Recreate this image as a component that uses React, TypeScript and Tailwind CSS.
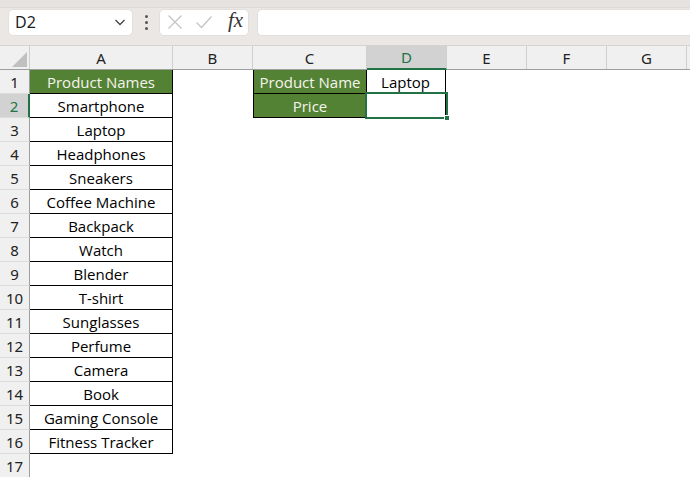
import React from 'react';

const cols = [
  { name: 'A', w: 143 },
  { name: 'B', w: 80 },
  { name: 'C', w: 114 },
  { name: 'D', w: 80 },
  { name: 'E', w: 80 },
  { name: 'F', w: 80 },
  { name: 'G', w: 80 },
  { name: '', w: 80 },
];

const products = [
  'Smartphone',
  'Laptop',
  'Headphones',
  'Sneakers',
  'Coffee Machine',
  'Backpack',
  'Watch',
  'Blender',
  'T-shirt',
  'Sunglasses',
  'Perfume',
  'Camera',
  'Book',
  'Gaming Console',
  'Fitness Tracker',
];

const cellFont = { fontFamily: '"Open Sans", "Noto Sans", sans-serif' };

function Toolbar() {
  return (
    <div className="h-[46px] bg-[#ebe7e5] relative border-b border-[#d6d2d0]">
      <div className="h-[8px] bg-[#e6e2e0] border-b border-[#dedad8]" />
      <div className="flex items-center gap-0 pl-[8px] h-[28px]">
        <div className="w-[125px] h-[27px] bg-white rounded-[5px] border border-[#e2dfdd] flex items-center justify-between pl-[6px] pr-[5px]">
          <span className="text-[16px] text-[#1f1f1f]" style={{ fontFamily: '"Noto Sans", sans-serif' }}>D2</span>
          <svg width="14" height="14" viewBox="0 0 14 14" fill="none">
            <path d="M2.5 5 L7 9.5 L11.5 5" stroke="#444" strokeWidth="1.3" />
          </svg>
        </div>
        <div className="w-[26px] flex flex-col items-center gap-[3px]">
          <span className="w-[3px] h-[3px] bg-[#555] rounded-full" />
          <span className="w-[3px] h-[3px] bg-[#555] rounded-full" />
          <span className="w-[3px] h-[3px] bg-[#555] rounded-full" />
        </div>
        <div className="w-[90px] h-[27px] bg-white rounded-[5px] border border-[#e2dfdd] flex items-center pl-[7px]">
          <svg width="16" height="16" viewBox="0 0 16 16" fill="none">
            <path d="M1.5 1.5 L14.5 14.5 M14.5 1.5 L1.5 14.5" stroke="#c4c4c4" strokeWidth="1.3" />
          </svg>
          <svg className="ml-[12px]" width="18" height="16" viewBox="0 0 18 16" fill="none">
            <path d="M1.5 8.5 L6.5 13.5 L16.5 2.5" stroke="#c4c4c4" strokeWidth="1.3" />
          </svg>
          <span className="ml-[15px] text-[21px] italic text-[#333] leading-none -mt-[3px]" style={{ fontFamily: '"Liberation Serif", serif' }}>fx</span>
        </div>
        <div className="ml-[8px] flex-1 h-[27px] bg-white rounded-l-[5px] border border-r-0 border-[#e2dfdd]" />
      </div>
    </div>
  );
}

function HeaderRow() {
  return (
    <div className="flex h-[24px] bg-[#f0f0f0] border-b border-[#9e9e9e]">
      <div className="w-[30px] shrink-0 border-r border-[#cfcfcf] relative">
        <svg className="absolute right-[2px] bottom-[2px]" width="15" height="15" viewBox="0 0 15 15">
          <path d="M15 0 L15 15 L0 15 Z" fill="#c0c0c0" />
        </svg>
      </div>
      {cols.map((c, i) => (
        <div
          key={i}
          className={
            c.name === 'D'
              ? 'shrink-0 flex items-center justify-center pt-[1px] bg-[#d2d2d2] text-[#217346] border-r border-[#cfcfcf] border-b-2 border-b-[#217346] -mb-[1px]'
              : 'shrink-0 flex items-center justify-center pt-[1px] text-[#222] border-r border-[#cfcfcf]'
          }
          style={{ width: c.w, fontFamily: '"Noto Sans", sans-serif', fontSize: 15 }}
        >
          {c.name}
        </div>
      ))}
    </div>
  );
}

function Cell({ w, children, cls, green }: { w: number; children?: React.ReactNode; cls?: string; green?: boolean }) {
  return (
    <div
      className={
        'shrink-0 h-[24px] flex items-center justify-center pt-[2px] text-[15px] relative ' +
        (green ? 'bg-[#548235] text-[#f4f4ee] ' : 'text-black ') +
        (cls ?? '')
      }
      style={{ width: w, ...cellFont }}
    >
      {children}
    </div>
  );
}

function Row({ n }: { n: number }) {
  const selected = n === 2;
  const name = n === 1 ? 'Product Names' : products[n - 2];
  const inTable = n <= 16;
  return (
    <div className="flex h-[24px] bg-white">
      <div
        className={
          selected
            ? 'w-[30px] shrink-0 flex items-center justify-center pt-[2px] bg-[#d2d2d2] text-[#217346] border-r-2 border-[#217346] border-b border-b-[#dcdcdc]'
            : 'w-[30px] shrink-0 flex items-center justify-center pt-[2px] bg-[#f0f0f0] text-[#222] border-r border-[#9e9e9e] border-b border-b-[#dcdcdc]'
        }
        style={{ fontFamily: '"Noto Sans", sans-serif', fontSize: 15 }}
      >
        {n}
      </div>
      {inTable ? (
        <Cell w={143} green={n === 1} cls="border-r border-b border-black">
          {name}
        </Cell>
      ) : (
        <Cell w={143} />
      )}
      <Cell w={80} />
      {n === 1 && (
        <Cell w={114} green cls="border-l border-r border-b border-black">
          Product Name
        </Cell>
      )}
      {n === 2 && (
        <Cell w={114} green cls="border-l border-r border-b border-black">
          Price
        </Cell>
      )}
      {n > 2 && <Cell w={114} />}
      {n === 1 && (
        <Cell w={80} cls="border-r border-b border-black -ml-[1px]">
          Laptop
        </Cell>
      )}
      {n === 2 && (
        <Cell w={80} cls="border-r border-b border-black -ml-[1px]">
          <div className="absolute -left-[1px] -top-[2px] w-[83px] h-[27px] border-2 border-[#217346]">
            <div className="absolute -right-[4px] -bottom-[4px] w-[6px] h-[6px] bg-[#217346] border border-white" />
          </div>
        </Cell>
      )}
      {n > 2 && <Cell w={80} />}
      <Cell w={80} />
      <Cell w={80} />
      <Cell w={80} />
      <Cell w={80} />
    </div>
  );
}

export default function App() {
  const rows = Array.from({ length: 17 }, (_, i) => i + 1);
  return (
    <div className="w-[690px] h-[477px] overflow-hidden bg-white">
      <Toolbar />
      <HeaderRow />
      {rows.map((n) => (
        <Row key={n} n={n} />
      ))}
    </div>
  );
}
